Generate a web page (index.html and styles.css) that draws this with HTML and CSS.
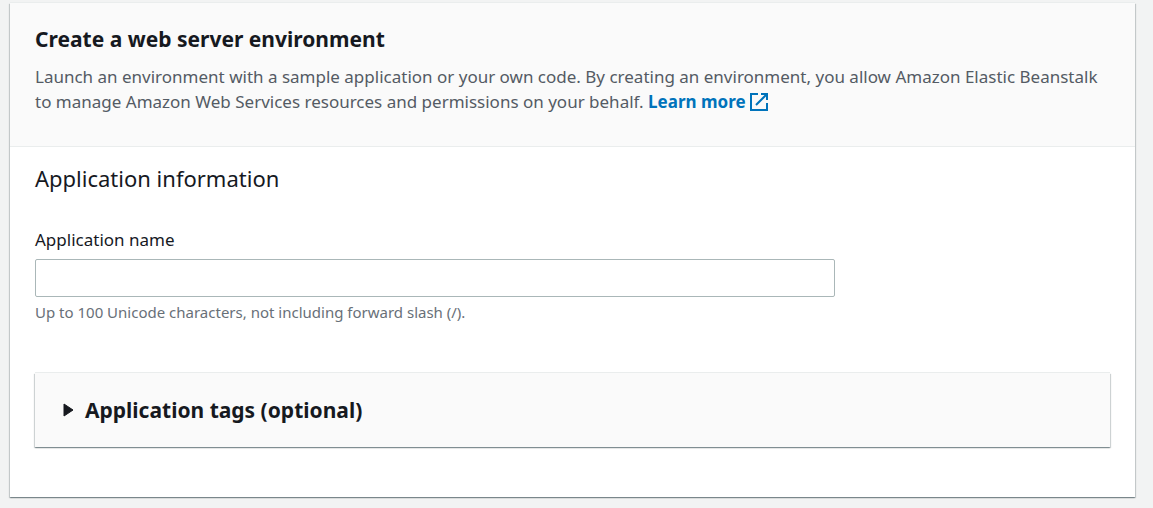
FILE: index.html
```html
<!DOCTYPE html>
<html lang="en">
<head>
<meta charset="utf-8">
<meta name="viewport" content="width=device-width, initial-scale=1">
<title>Create a web server environment</title>
<link rel="stylesheet" href="styles.css">
</head>
<body>
<main class="panel">
  <header class="panel-header">
    <h1 class="title">Create a web server environment</h1>
    <p class="description">Launch an environment with a sample application or your own code. By creating an environment, you allow Amazon Elastic Beanstalk to manage Amazon Web Services resources and permissions on your behalf. <a class="link" href="#learn-more">Learn more <svg class="external" viewBox="0 0 18 18" aria-hidden="true"><path d="M8 1H1v16h16v-7M11 1h6v6M17 1 6 12"/></svg></a></p>
  </header>
  <form class="panel-body">
    <h2 class="section-title">Application information</h2>
    <div class="field">
      <label class="label" for="app-name">Application name</label>
      <input class="input" id="app-name" type="text" maxlength="100" aria-describedby="app-name-hint">
      <p class="hint" id="app-name-hint">Up to 100 Unicode characters, not including forward slash (/).</p>
    </div>
    <section class="expander">
      <button class="expander-toggle" type="button" aria-expanded="false">
        <svg class="caret" viewBox="0 0 12 14" aria-hidden="true"><path d="M2 1v12l9-6z"/></svg>
        <span>Application tags (optional)</span>
      </button>
    </section>
  </form>
</main>
</body>
</html>
```

FILE: styles.css
```css
* {
  box-sizing: border-box;
}

body {
  margin: 0;
  padding: 3px 18px 10px 10px;
  background: #f2f3f3;
  color: #16191f;
  font-family: "Noto Sans", "Open Sans", sans-serif;
  font-size: 17px;
  line-height: 25px;
}

h1, h2, p {
  margin: 0;
}

.panel {
  background: #fff;
  box-shadow: 0 1px 1px 0 rgba(0, 28, 36, 0.3), 1px 1px 1px 0 rgba(0, 28, 36, 0.15), -1px 1px 1px 0 rgba(0, 28, 36, 0.15), 0 -1px 0 0 #eaeded;
}

.panel-header {
  padding: 22px 25px 32px;
  background: #fafafa;
  border-bottom: 1px solid #eaeded;
}

.title {
  margin-bottom: 11px;
  font-size: 21px;
  line-height: 28px;
  font-weight: 700;
}

.description {
  color: #545b64;
}

.link {
  display: inline-block;
  color: #0073bb;
  font-weight: 700;
  text-decoration: none;
}

.external {
  width: 18px;
  height: 18px;
  vertical-align: -3px;
  fill: none;
  stroke: currentColor;
  stroke-width: 2;
}

.panel-body {
  padding: 16px 25px 50px;
}

.section-title {
  margin-bottom: 34px;
  font-size: 22px;
  line-height: 30px;
  font-weight: 400;
}

.field {
  margin-bottom: 50px;
}

.label {
  display: block;
  margin-bottom: 7px;
}

.input {
  display: block;
  width: 100%;
  max-width: 800px;
  height: 38px;
  padding: 5px 12px;
  border: 1px solid #aab7b8;
  border-radius: 2px;
  background: #fff;
  color: inherit;
  font: inherit;
}

.hint {
  margin-top: 4px;
  color: #687078;
  font-size: 15px;
  line-height: 22px;
}

.expander {
  background: #fafafa;
  box-shadow: 0 1px 1px 0 rgba(0, 28, 36, 0.3), 1px 1px 1px 0 rgba(0, 28, 36, 0.15), -1px 1px 1px 0 rgba(0, 28, 36, 0.15), 0 -1px 0 0 #eaeded;
}

.expander-toggle {
  display: flex;
  align-items: center;
  gap: 11px;
  width: 100%;
  padding: 23px 27px;
  border: 0;
  background: none;
  color: inherit;
  font: inherit;
  font-size: 21px;
  line-height: 28px;
  font-weight: 700;
  text-align: left;
}

.caret {
  width: 12px;
  height: 14px;
  fill: currentColor;
  stroke: currentColor;
  stroke-linejoin: round;
}
```
